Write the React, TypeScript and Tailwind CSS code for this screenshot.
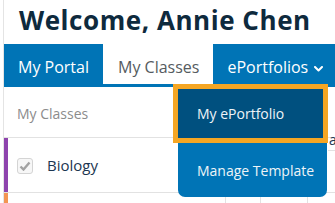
import { useState } from 'react';

const tabs = [
  { label: 'My Portal', active: false },
  { label: 'My Classes', active: true },
  { label: 'ePortfolios', active: false, menu: true },
];

function Chevron() {
  return (
    <svg width="9" height="6" viewBox="0 0 9 6" className="ml-[6px] mt-[3px]">
      <polyline points="1,1 4.5,4.5 8,1" fill="none" stroke="currentColor" strokeWidth="2" strokeLinecap="round" strokeLinejoin="round" />
    </svg>
  );
}

function Checkbox() {
  return (
    <span className="flex h-4 w-4 items-center justify-center rounded-[3px] border border-[#d4d4d4] bg-[#f7f7f7]">
      <svg width="12" height="10" viewBox="0 0 12 10">
        <polyline points="1.5,5.5 4.5,8.5 10.5,1.5" fill="none" stroke="#a3a3a3" strokeWidth="2.4" />
      </svg>
    </span>
  );
}

export default function App() {
  const [open] = useState(true);

  return (
    <div className="relative h-[203px] w-[335px] overflow-hidden bg-white font-['Open_Sans',sans-serif]">
      <div className="ml-[3px] min-h-full w-[340px] border-l border-[#e4e4e4]">
        <h1 className="h-[44px] pl-[15px] pt-[3px] text-[26px] font-bold leading-[34px] tracking-[0.55px] text-[#0e2a3d]">
          Welcome, Annie Chen
        </h1>

        <nav className="flex h-[43px] border-b-[3px] border-[#0074b6]">
          {tabs.map((t) => (
            <div
              key={t.label}
              className={
                t.active
                  ? 'flex h-[40px] items-center bg-white pl-[15px] pr-[14px] pt-[6px] text-[16px] leading-6 text-[#555b60]'
                  : 'flex h-[40px] items-center bg-[#0074b6] pl-[14px] pr-[14px] pt-[6px] text-[16px] leading-6 text-white'
              }
            >
              {t.label}
              {t.menu && <Chevron />}
            </div>
          ))}
        </nav>

        <div className="flex h-[51px] items-center border-b border-[#e2e2e2] pl-[13px] pt-[3px] text-[14px] text-[#8c8c8c]">
          My Classes
        </div>

        <div className="flex h-[55px] items-center border-b border-[#e2e2e2]">
          <span className="h-full w-[4px] bg-[#8e44ad]" />
          <span className="ml-[9px] mt-[2px]">
            <Checkbox />
          </span>
          <span className="ml-[14px] mt-[1px] text-[15px] text-[#1c3651]">Biology</span>
        </div>

        <div className="flex h-[30px]">
          <span className="h-full w-[4px] bg-[#f39552]" />
          <span className="w-[217px]" />
          <span className="w-[35px] border-l border-[#e2e2e2]" />
          <span className="w-[47px] border-l border-[#e2e2e2]" />
          <span className="flex-1 border-l border-[#e2e2e2]" />
        </div>
      </div>

      <span className="absolute left-[329px] top-[129px] text-[14px] text-[#1c3651]">ar</span>
      <span className="absolute left-[328px] top-[150px] h-px w-[8px] bg-[#e2e2e2]" />

      {open && (
        <div className="absolute left-[173px] top-[84px] flex w-[155px] flex-col">
          <a className="flex h-[59px] items-center border-[5px] border-[#f5a623] bg-[#00507f] pl-[19px] text-[14px] text-[#eef4f8]">
            My ePortfolio
          </a>
          <a className="ml-[5px] flex h-[54px] w-[149px] items-center rounded-b-[7px] bg-[#0074b6] pl-[19px] pt-[1px] text-[14px] text-[#eef4f8]">
            Manage Template
          </a>
        </div>
      )}
    </div>
  );
}
